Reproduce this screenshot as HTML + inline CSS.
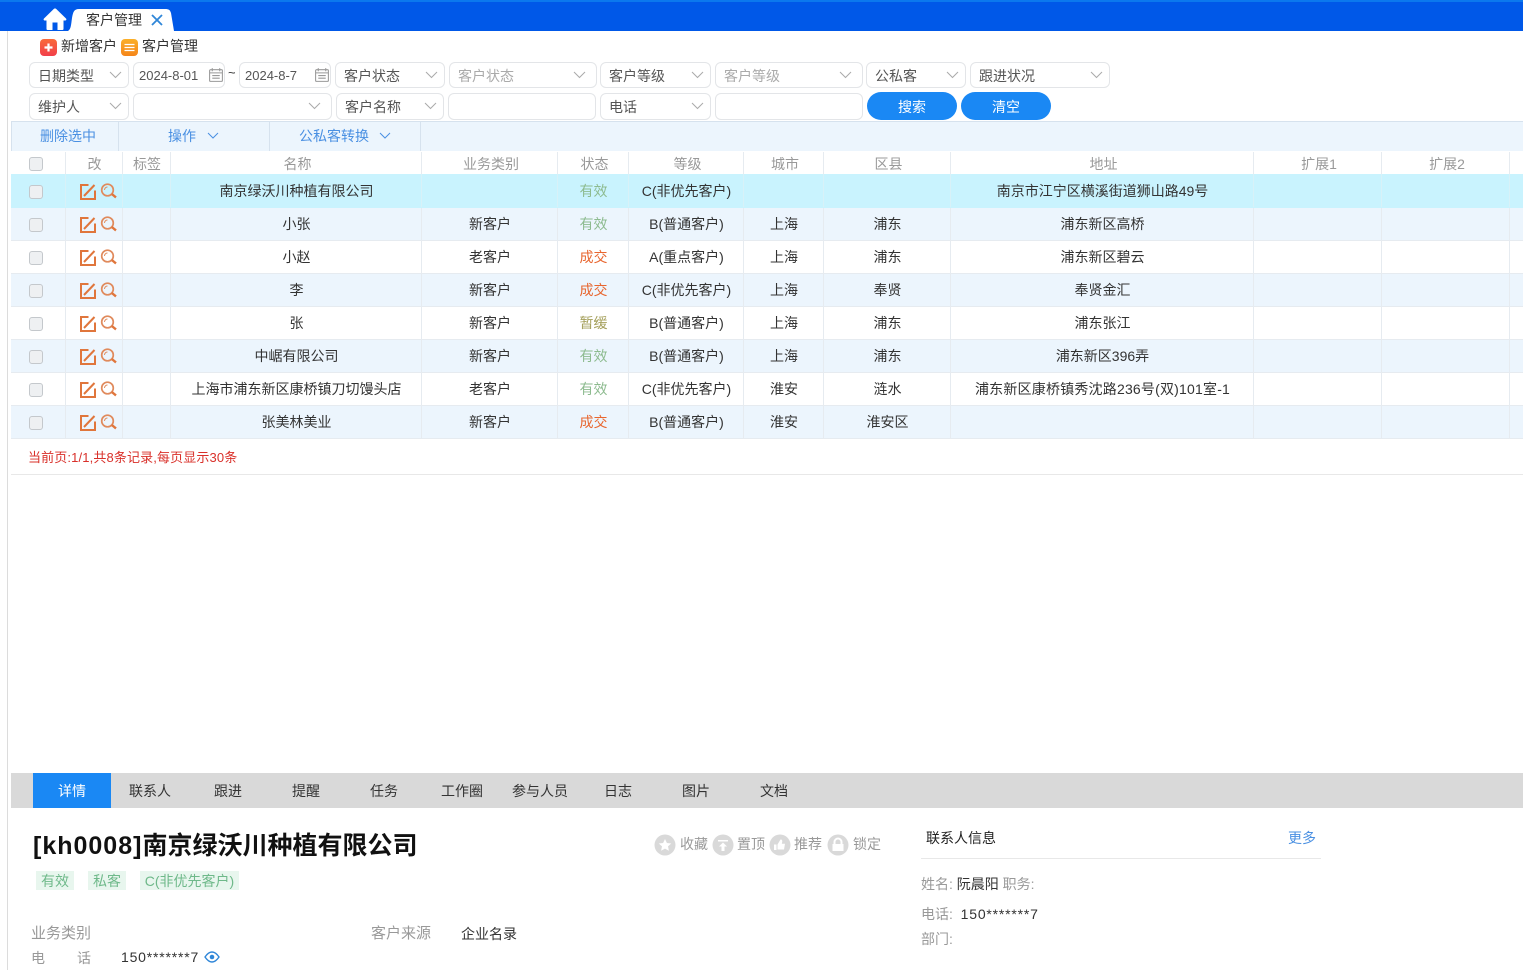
<!DOCTYPE html>
<html lang="zh"><head><meta charset="utf-8"><title>客户管理</title>
<style>
*{box-sizing:border-box}
html,body{margin:0;padding:0;width:1523px;height:970px;overflow:hidden;background:#fff}
body{position:relative;font:14px/20px "Liberation Sans","Noto Sans CJK SC",sans-serif;color:#333}
.a{position:absolute;white-space:nowrap}
.box{position:absolute;height:26px;border:1px solid #e3e5e8;border-radius:6px;background:#fff;line-height:26px;padding-left:8px;color:#555;white-space:nowrap}
.ph{color:#aaa}
.box svg{position:absolute;right:6px;top:8px}
.box.w svg{right:10px}
.btn{position:absolute;top:92px;width:90px;height:28px;border-radius:14px;background:#1a88f4;color:#fff;text-align:center;line-height:31px}
table{position:absolute;left:11px;top:152px;width:1512px;border-collapse:collapse;table-layout:fixed}
td,th{padding:0 0 0 2px;text-align:center;font-weight:400;border-right:1px solid #e6ebf0;border-bottom:1px solid #e6ebf0;overflow:hidden;white-space:nowrap;color:#333}
th{height:22px;color:#999;border-bottom:0;padding:1px 0 0 4px}
th:first-child,td:first-child{padding:0 3px 0 0}
th:nth-child(2){padding-left:2px}
th:nth-child(3){padding-left:2px}
td:nth-child(2){padding-left:0}
td{height:33px}
tr.s td{background:#c9f3fe;height:33px;border-bottom-color:#c9f3fe;border-right-color:#d8f1f8;padding-top:1px}
tr.e td{background:#ecf5fd}
td:last-child,th:last-child{border-right:0}
.cb{display:inline-block;width:14px;height:14px;border:1px solid #c4c8cc;border-radius:3px;background:#eef0f2;vertical-align:middle}
.g{color:#8dbb8f}.o{color:#e8662f}.y{color:#a5a05c}
.ic{display:block;margin:1px 0 0 13px}
.tab{position:absolute;top:773px;height:35px;width:78px;text-align:center;line-height:36px}
.tag{position:absolute;top:871px;height:19px;line-height:20px;background:#e8f6ee;color:#6fb98a;text-align:center;white-space:nowrap}
.lb{color:#999}
.l15{font-size:15px}
</style></head><body>
<div class="a" style="left:0;top:0;width:1523px;height:31px;background:#0058e8"></div>
<div class="a" style="left:0;top:0;width:1523px;height:2px;background:#0b78ee"></div>
<svg class="a" style="left:43px;top:8px" width="24" height="23" viewBox="0 0 24 23"><path d="M12 .5c.6 0 1 .2 1.400.6L23 10.500c.8.800.3 2-.8 2H20.500V21a1 1 0 0 1-1 1H14.500v-7.500h-5V22H4.500a1 1 0 0 1-1-1V12.500H1.800c-1.100 0-1.600-1.200-.8-2L10.600 1.100c.4-.4.800-.6 1.400-.6z" fill="#fff"/></svg>
<svg class="a" style="left:67px;top:9px" width="108" height="22" viewBox="0 0 108 22"><path d="M1 22C4 20 4 16 5 9 6 3 7 0 12 0H98C102 0 103 1 104 4L107 22Z" fill="#fff"/></svg>
<div class="a" style="left:86px;top:10px;color:#333">客户管理</div>
<svg class="a" style="left:151px;top:14px" width="12" height="12" viewBox="0 0 12 12"><path d="M1 1L11 11M11 1L1 11" stroke="#2f86d8" stroke-width="1.800" fill="none"/></svg>
<div class="a" style="left:7px;top:31px;width:1px;height:939px;background:#dcdcdc"></div>

<svg class="a" style="left:40px;top:39px" width="17" height="17" viewBox="0 0 17 17"><defs><linearGradient id="r" x1="0" y1="0" x2="0" y2="1"><stop offset="0" stop-color="#f96a3a"/><stop offset="1" stop-color="#f23f4a"/></linearGradient><linearGradient id="y" x1="0" y1="0" x2="0" y2="1"><stop offset="0" stop-color="#fbb02a"/><stop offset="1" stop-color="#f5851a"/></linearGradient></defs><rect width="17" height="17" rx="4" fill="url(#r)"/><path d="M8.500 4.500v8M4.500 8.500h8" stroke="#fff" stroke-width="2.200"/></svg>
<div class="a" style="left:61px;top:36px">新增客户</div>
<svg class="a" style="left:121px;top:39px" width="17" height="17" viewBox="0 0 17 17"><rect width="17" height="17" rx="4" fill="url(#y)"/><path d="M3.500 5.500h10M3.500 8.500h10M3.500 11.500h10" stroke="#fff" stroke-width="1.300"/></svg>
<div class="a" style="left:142px;top:36px">客户管理</div>

<div class="box" style="left:29px;top:62px;width:100px">日期类型<svg width="13" height="8" viewBox="0 0 13 8"><path d="M1 1l5.500 5.500L12 1" stroke="#aaa" fill="none"/></svg></div>
<div class="box" style="left:133px;top:62px;width:92px;padding-left:5px;font-size:13px">2024-8-01<svg style="top:4px;right:0" width="16" height="16" viewBox="0 0 15 15"><path d="M1.500 3.500a1 1 0 0 1 1-1h10a1 1 0 0 1 1 1v9a1 1 0 0 1-1 1h-10a1 1 0 0 1-1-1zM1.500 5.500h12M4 1v3M11 1v3M4 8h7M4 10.500h7" stroke="#999" fill="none"/></svg></div>
<div class="a" style="left:228px;top:63px;font-size:13px">~</div>
<div class="box" style="left:239px;top:62px;width:92px;padding-left:5px;font-size:13px">2024-8-7<svg style="top:4px;right:0" width="16" height="16" viewBox="0 0 15 15"><path d="M1.500 3.500a1 1 0 0 1 1-1h10a1 1 0 0 1 1 1v9a1 1 0 0 1-1 1h-10a1 1 0 0 1-1-1zM1.500 5.500h12M4 1v3M11 1v3M4 8h7M4 10.500h7" stroke="#999" fill="none"/></svg></div>
<div class="box" style="left:335px;top:62px;width:110px">客户状态<svg width="13" height="8" viewBox="0 0 13 8"><path d="M1 1l5.500 5.500L12 1" stroke="#aaa" fill="none"/></svg></div>
<div class="box ph w" style="left:449px;top:62px;width:148px">客户状态<svg width="13" height="8" viewBox="0 0 13 8"><path d="M1 1l5.500 5.500L12 1" stroke="#aaa" fill="none"/></svg></div>
<div class="box" style="left:600px;top:62px;width:111px">客户等级<svg width="13" height="8" viewBox="0 0 13 8"><path d="M1 1l5.500 5.500L12 1" stroke="#aaa" fill="none"/></svg></div>
<div class="box ph w" style="left:715px;top:62px;width:148px">客户等级<svg width="13" height="8" viewBox="0 0 13 8"><path d="M1 1l5.500 5.500L12 1" stroke="#aaa" fill="none"/></svg></div>
<div class="box" style="left:866px;top:62px;width:100px">公私客<svg width="13" height="8" viewBox="0 0 13 8"><path d="M1 1l5.500 5.500L12 1" stroke="#aaa" fill="none"/></svg></div>
<div class="box" style="left:970px;top:62px;width:140px">跟进状况<svg width="13" height="8" viewBox="0 0 13 8"><path d="M1 1l5.500 5.500L12 1" stroke="#aaa" fill="none"/></svg></div>

<div class="box" style="left:29px;top:93px;width:100px;height:27px">维护人<svg width="13" height="8" viewBox="0 0 13 8"><path d="M1 1l5.500 5.500L12 1" stroke="#aaa" fill="none"/></svg></div>
<div class="box w" style="left:133px;top:93px;width:199px;height:27px"><svg width="13" height="8" viewBox="0 0 13 8"><path d="M1 1l5.500 5.500L12 1" stroke="#aaa" fill="none"/></svg></div>
<div class="box" style="left:336px;top:93px;width:108px;height:27px">客户名称<svg width="13" height="8" viewBox="0 0 13 8"><path d="M1 1l5.500 5.500L12 1" stroke="#aaa" fill="none"/></svg></div>
<div class="box" style="left:448px;top:93px;width:148px;height:27px"></div>
<div class="box" style="left:600px;top:93px;width:111px;height:27px">电话<svg width="13" height="8" viewBox="0 0 13 8"><path d="M1 1l5.500 5.500L12 1" stroke="#aaa" fill="none"/></svg></div>
<div class="box" style="left:715px;top:93px;width:148px;height:27px"></div>
<div class="btn" style="left:867px">搜索</div>
<div class="btn" style="left:961px">清空</div>

<div class="a" style="left:11px;top:121px;width:1512px;height:30px;background:#ecf5fd;border-top:1px solid #d6e2ee;border-left:1px solid #d6e2ee"></div>
<div class="a" style="left:118px;top:122px;width:1px;height:29px;background:#d6e2ee"></div>
<div class="a" style="left:269px;top:122px;width:1px;height:29px;background:#d6e2ee"></div>
<div class="a" style="left:420px;top:122px;width:1px;height:29px;background:#d6e2ee"></div>
<div class="a" style="left:40px;top:126px;color:#4a90e2">删除选中</div>
<div class="a" style="left:168px;top:126px;color:#4a90e2">操作</div>
<svg class="a" style="left:207px;top:132px" width="12" height="8" viewBox="0 0 12 8"><path d="M1 1l5 5 5-5" stroke="#4a90e2" fill="none"/></svg>
<div class="a" style="left:299px;top:126px;color:#4a90e2">公私客转换</div>
<svg class="a" style="left:379px;top:132px" width="12" height="8" viewBox="0 0 12 8"><path d="M1 1l5 5 5-5" stroke="#4a90e2" fill="none"/></svg>

<svg width="0" height="0" style="position:absolute"><defs>
<g id="ed"><path d="M9.500 2H2v14h14V7.500" stroke="#e0763c" stroke-width="2" fill="none"/><path d="M5 13L15.500 2" stroke="#e0763c" stroke-width="2" fill="none"/></g>
<g id="se"><circle cx="7.500" cy="7" r="5.800" stroke="#e08a5c" stroke-width="1.700" fill="none"/><path d="M11.800 11l4.200 3.400" stroke="#e0763c" stroke-width="2.400"/><path d="M4.500 7a3 3 0 0 1 3-3" stroke="#e08a5c" fill="none"/></g>
</defs></svg>

<table>
<colgroup><col style="width:54px"><col style="width:57px"><col style="width:48px"><col style="width:251px"><col style="width:136px"><col style="width:71px"><col style="width:115px"><col style="width:80px"><col style="width:127px"><col style="width:303px"><col style="width:128px"><col style="width:128px"><col></colgroup>
<tr><th><span class="cb"></span></th><th>改</th><th>标签</th><th>名称</th><th>业务类别</th><th>状态</th><th>等级</th><th>城市</th><th>区县</th><th>地址</th><th>扩展1</th><th>扩展2</th><th></th></tr>
<tr class="s"><td><span class="cb"></span></td><td><svg class="ic" width="38" height="17"><use href="#ed"/><use href="#se" x="21"/></svg></td><td></td><td>南京绿沃川种植有限公司</td><td></td><td class="g">有效</td><td>C(非优先客户)</td><td></td><td></td><td>南京市江宁区横溪街道狮山路49号</td><td></td><td></td><td></td></tr>
<tr class="e"><td><span class="cb"></span></td><td><svg class="ic" width="38" height="17"><use href="#ed"/><use href="#se" x="21"/></svg></td><td></td><td>小张</td><td>新客户</td><td class="g">有效</td><td>B(普通客户)</td><td>上海</td><td>浦东</td><td>浦东新区高桥</td><td></td><td></td><td></td></tr>
<tr><td><span class="cb"></span></td><td><svg class="ic" width="38" height="17"><use href="#ed"/><use href="#se" x="21"/></svg></td><td></td><td>小赵</td><td>老客户</td><td class="o">成交</td><td>A(重点客户)</td><td>上海</td><td>浦东</td><td>浦东新区碧云</td><td></td><td></td><td></td></tr>
<tr class="e"><td><span class="cb"></span></td><td><svg class="ic" width="38" height="17"><use href="#ed"/><use href="#se" x="21"/></svg></td><td></td><td>李</td><td>新客户</td><td class="o">成交</td><td>C(非优先客户)</td><td>上海</td><td>奉贤</td><td>奉贤金汇</td><td></td><td></td><td></td></tr>
<tr><td><span class="cb"></span></td><td><svg class="ic" width="38" height="17"><use href="#ed"/><use href="#se" x="21"/></svg></td><td></td><td>张</td><td>新客户</td><td class="y">暂缓</td><td>B(普通客户)</td><td>上海</td><td>浦东</td><td>浦东张江</td><td></td><td></td><td></td></tr>
<tr class="e"><td><span class="cb"></span></td><td><svg class="ic" width="38" height="17"><use href="#ed"/><use href="#se" x="21"/></svg></td><td></td><td>中崌有限公司</td><td>新客户</td><td class="g">有效</td><td>B(普通客户)</td><td>上海</td><td>浦东</td><td>浦东新区396弄</td><td></td><td></td><td></td></tr>
<tr><td><span class="cb"></span></td><td><svg class="ic" width="38" height="17"><use href="#ed"/><use href="#se" x="21"/></svg></td><td></td><td>上海市浦东新区康桥镇刀切馒头店</td><td>老客户</td><td class="g">有效</td><td>C(非优先客户)</td><td>淮安</td><td>涟水</td><td style="letter-spacing:.2px">浦东新区康桥镇秀沈路236号(双)101室-1</td><td></td><td></td><td></td></tr>
<tr class="e"><td><span class="cb"></span></td><td><svg class="ic" width="38" height="17"><use href="#ed"/><use href="#se" x="21"/></svg></td><td></td><td>张美林美业</td><td>新客户</td><td class="o">成交</td><td>B(普通客户)</td><td>淮安</td><td>淮安区</td><td></td><td></td><td></td><td></td></tr>
</table>
<div class="a" style="left:28px;top:448px;color:#d9302a;font-size:13px;letter-spacing:.13px">当前页:1/1,共8条记录,每页显示30条</div>
<div class="a" style="left:11px;top:474px;width:1512px;height:1px;background:#e8e8e8"></div>

<div class="a" style="left:11px;top:773px;width:1512px;height:35px;background:#d9d9d9"></div>
<div class="tab" style="left:33px;background:#1a88f4;color:#fff">详情</div>
<div class="tab" style="left:111px">联系人</div>
<div class="tab" style="left:189px">跟进</div>
<div class="tab" style="left:267px">提醒</div>
<div class="tab" style="left:345px">任务</div>
<div class="tab" style="left:423px">工作圈</div>
<div class="tab" style="left:501px">参与人员</div>
<div class="tab" style="left:579px">日志</div>
<div class="tab" style="left:657px">图片</div>
<div class="tab" style="left:735px">文档</div>

<div class="a" style="left:33px;top:828px;font-size:25px;line-height:36px;font-weight:700;color:#111"><span style="letter-spacing:1px">[kh0008]</span>南京绿沃川种植有限公司</div>
<div class="tag" style="left:36px;width:38px">有效</div>
<div class="tag" style="left:88px;width:38px">私客</div>
<div class="tag" style="left:140px;width:99px">C(非优先客户)</div>

<svg class="a" style="left:654px;top:834px" width="228" height="22" viewBox="0 0 228 22"><g fill="#d9d9d9"><circle cx="11" cy="11" r="10.500"/><circle cx="69" cy="11" r="10.500"/><circle cx="126" cy="11" r="10.500"/><circle cx="184" cy="11" r="10.500"/></g><g fill="#fff"><path d="M11 5l1.900 4 4.300.5-3.200 2.900.9 4.300L11 14.600l-3.900 2.100.9-4.300-3.200-2.900 4.300-.5z"/><path d="M64 6h10v1.500H64zM69 8.500l4 4h-2.500V17h-3v-4.500H65z"/><path d="M120 10.500h2.500V16H120zM123.500 10.500l3-5c1.500 0 2 1 1.700 2.500l-.4 1.800h3.200l-1 5.700h-6.500z"/><path d="M179.500 10V8a4.500 4.500 0 0 1 9 0v2h1v7h-11v-7zM181.500 10h5V8a2.500 2.500 0 0 0-5 0z"/></g></svg>
<div class="a" style="left:680px;top:834px;color:#999">收藏</div>
<div class="a" style="left:737px;top:834px;color:#999">置顶</div>
<div class="a" style="left:794px;top:834px;color:#999">推荐</div>
<div class="a" style="left:853px;top:834px;color:#999">锁定</div>

<div class="a" style="left:926px;top:828px;color:#222">联系人信息</div>
<div class="a" style="left:1288px;top:828px;color:#4a90e2">更多</div>
<div class="a" style="left:921px;top:858px;width:400px;height:1px;background:#e8e8e8"></div>
<div class="a" style="left:921px;top:874px"><span class="lb">姓名:</span> 阮晨阳 <span class="lb">职务:</span></div>
<div class="a" style="left:921px;top:904px"><span class="lb">电话:</span>&nbsp; <span style="letter-spacing:.8px">150*******7</span></div>
<div class="a lb" style="left:921px;top:929px">部门:</div>

<div class="a lb l15" style="left:31px;top:924px">业务类别</div>
<div class="a lb l15" style="left:371px;top:924px">客户来源</div>
<div class="a" style="left:461px;top:924px">企业名录</div>
<div class="a lb" style="left:31px;top:948px">电</div>
<div class="a lb" style="left:77px;top:948px">话</div>
<div class="a" style="left:121px;top:947px;letter-spacing:.8px">150*******7</div>
<svg class="a" style="left:204px;top:951px" width="16" height="12" viewBox="0 0 16 12"><path d="M1 6c2-3 4.500-5 7-5s5 2 7 5c-2 3-4.500 5-7 5S3 9 1 6z" stroke="#2f86d8" stroke-width="1.400" fill="none"/><circle cx="8" cy="6" r="2.300" fill="#2f86d8"/></svg>
</body></html>
